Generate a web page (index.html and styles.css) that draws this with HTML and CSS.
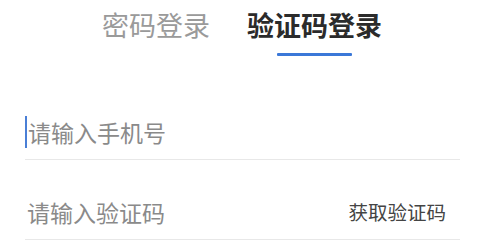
FILE: index.html
```html
<!DOCTYPE html>
<html lang="zh-CN">
<head>
    <meta charset="UTF-8">
    <meta name="viewport" content="width=device-width, initial-scale=1.0">
    <title>登录</title>
    <link rel="stylesheet" href="styles.css">
</head>
<body>
    <div class="login">
        <div class="tabs">
            <div class="tab">密码登录</div>
            <div class="tab active">验证码登录</div>
        </div>
        <div class="form">
            <div class="field">
                <span class="caret"></span>
                <input type="text" placeholder="请输入手机号">
            </div>
            <div class="field">
                <input type="text" placeholder="请输入验证码">
                <span class="get-code">获取验证码</span>
            </div>
        </div>
    </div>
</body>
</html>
```

FILE: styles.css
```css
body {
    margin: 0;
    background-color: #fff;
    font-family: "Noto Sans CJK SC", "Noto Sans", sans-serif;
    color: #333;
}

.tabs {
    display: flex;
    justify-content: center;
    gap: 37px;
    height: 80px;
    padding-left: 4px;
}

.tab {
    position: relative;
    font-size: 27px;
    line-height: 50px;
    color: #9a9a9a;
}

.tab.active {
    font-weight: bold;
    color: #2b2b2b;
}

.tab.active::after {
    content: "";
    position: absolute;
    left: 30px;
    width: 75px;
    top: 53px;
    height: 3px;
    background-color: #3b78d8;
    border-radius: 1px;
}

.form {
    margin: 0 20px 0 25px;
}

.field {
    display: flex;
    align-items: center;
    height: 55px;
    margin-top: 24px;
    border-bottom: 1px solid #e8e8e8;
}

.caret {
    width: 2px;
    height: 32px;
    background-color: #4a7fd6;
    margin-right: 1px;
}

.field input {
    flex: 1;
    min-width: 0;
    border: none;
    outline: none;
    padding: 0;
    font-family: inherit;
    font-size: 23px;
    color: #333;
    background: transparent;
}

.field:last-child input {
    padding-left: 2px;
}

.field input::placeholder {
    color: #8a8a8a;
}

.get-code {
    font-size: 19.5px;
    color: #444;
    margin-right: 14px;
}
```
